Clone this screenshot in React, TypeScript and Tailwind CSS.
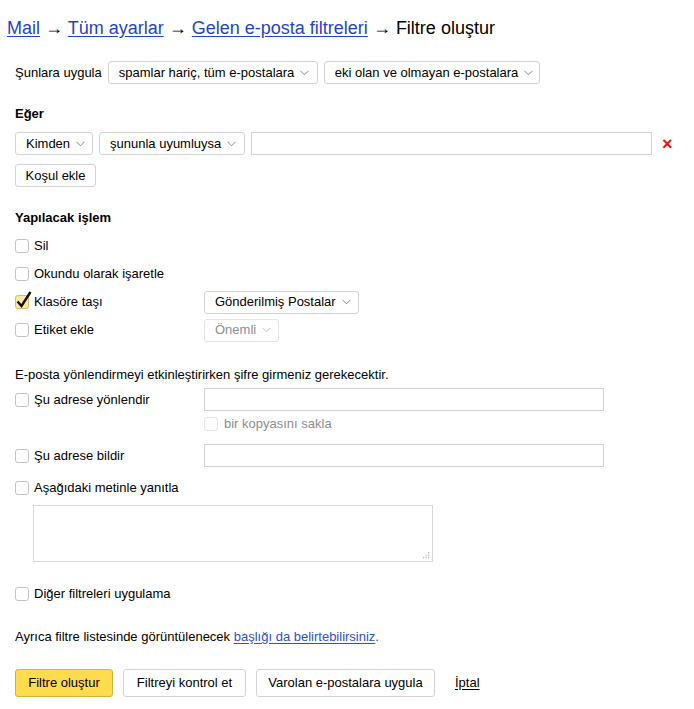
import React from 'react';

const Chevron = ({ muted = false }: { muted?: boolean }) => (
  <svg width="9" height="6" viewBox="0 0 9 6" className="ml-[6px] shrink-0">
    <path d="M0.5 0.8 L4.5 4.8 L8.5 0.8" fill="none" stroke={muted ? '#c4c4c4' : '#8a8a8a'} strokeWidth="1" />
  </svg>
);

const Select = ({ label, width, disabled = false }: { label: string; width: string; disabled?: boolean }) => (
  <div
    className={`${width} h-[23px] flex items-center justify-between pl-[10px] pr-[8px] rounded-[3px] border bg-white ${
      disabled ? 'border-[#e3e3e3] text-[#8d8d8d]' : 'border-[#d3d3d3] text-black'
    }`}
  >
    <span className="whitespace-nowrap">{label}</span>
    <Chevron muted={disabled} />
  </div>
);

const Box = ({ checked = false, disabled = false }: { checked?: boolean; disabled?: boolean }) => (
  <span
    className={`relative w-[14px] h-[14px] shrink-0 rounded-[3px] border ${
      checked ? 'bg-[#fbe7a6] border-[#d9bc62]' : disabled ? 'bg-white border-[#e2e2e2]' : 'bg-white border-[#c3c3c3]'
    }`}
  >
    {checked && (
      <svg width="18" height="19" viewBox="0 0 18 19" className="absolute left-[-1px] top-[-6px]">
        <path d="M2.5 11.5 L6.5 16 L15.5 2" fill="none" stroke="#111" strokeWidth="2.4" strokeLinejoin="miter" />
      </svg>
    )}
  </span>
);

const Check = ({ label, checked = false }: { label: string; checked?: boolean }) => (
  <label className="flex items-center gap-[5px] w-[189px] shrink-0">
    <Box checked={checked} />
    <span className="whitespace-nowrap">{label}</span>
  </label>
);

const TextBox = ({ width }: { width: string }) => (
  <div className={`${width} h-[23px] border border-[#d3d3d3] bg-white`} />
);

const App: React.FC = () => {
  return (
    <div
      className="min-h-[709px] bg-white text-black text-[13px] leading-[16px] pl-[15px] pt-[16px]"
      style={{ fontFamily: '"Liberation Sans", Arial, sans-serif' }}
    >
      {/* başlık */}
      <h1 className="h-[24px] ml-[-8px] text-[18px] leading-[24px] font-normal whitespace-nowrap">
        <a className="text-[#1f44c6] underline underline-offset-2">Mail</a> →{' '}
        <a className="text-[#1f44c6] underline underline-offset-2">Tüm ayarlar</a> →{' '}
        <a className="text-[#1f44c6] underline underline-offset-2">Gelen e-posta filtreleri</a> → Filtre oluştur
      </h1>

      <div className="mt-[21px] flex items-center gap-[6px] h-[23px]">
        <span>Şunlara uygula</span>
        <Select label="spamlar hariç, tüm e-postalara" width="w-[210px]" />
        <Select label="eki olan ve olmayan e-postalara" width="w-[216px]" />
      </div>

      <div className="mt-[22px] font-bold">Eğer</div>

      <div className="mt-[10px] flex items-center gap-[6px] h-[23px]">
        <Select label="Kimden" width="w-[78px]" />
        <Select label="şununla uyumluysa" width="w-[146px]" />
        <TextBox width="w-[401px]" />
        <span className="ml-[4px] text-[#ee1111] font-bold text-[18px] leading-[18px]">×</span>
      </div>

      <button className="mt-[9px] h-[23px] w-[81px] rounded-[3px] border border-[#d3d3d3] bg-white flex items-center justify-center">
        Koşul ekle
      </button>

      <div className="mt-[23px] font-bold">Yapılacak işlem</div>

      <div className="mt-[6px] flex flex-col">
        <div className="h-[28px] flex items-center">
          <Check label="Sil" />
        </div>
        <div className="h-[28px] flex items-center">
          <Check label="Okundu olarak işaretle" />
        </div>
        <div className="h-[28px] flex items-center">
          <Check label="Klasöre taşı" checked />
          <Select label="Gönderilmiş Postalar" width="w-[155px]" />
        </div>
        <div className="h-[28px] flex items-center">
          <Check label="Etiket ekle" />
          <Select label="Önemli" width="w-[75px]" disabled />
        </div>
      </div>

      <div className="mt-[23px]">E-posta yönlendirmeyi etkinleştirirken şifre girmeniz gerekecektir.</div>

      <div className="mt-[5px] flex items-center h-[23px]">
        <Check label="Şu adrese yönlendir" />
        <TextBox width="w-[400px]" />
      </div>
      <div className="mt-[6px] ml-[189px] flex items-center gap-[6px] h-[14px] text-[#8d8d8d]">
        <Box disabled />
        <span>bir kopyasını sakla</span>
      </div>

      <div className="mt-[13px] flex items-center h-[23px]">
        <Check label="Şu adrese bildir" />
        <TextBox width="w-[400px]" />
      </div>

      <div className="mt-[14px] flex items-center h-[14px]">
        <Check label="Aşağıdaki metinle yanıtla" />
      </div>

      <div className="relative mt-[10px] ml-[18px] w-[400px] h-[57px] border border-[#d8d8d8] bg-white">
        <textarea className="w-full h-full resize-none outline-none bg-transparent" />
        <svg width="7" height="7" viewBox="0 0 7 7" className="absolute right-[2px] bottom-[2px]">
          <rect x="5" y="0" width="1.2" height="1.2" fill="#b5b5b5" />
          <rect x="5" y="2.5" width="1.2" height="1.2" fill="#b5b5b5" />
          <rect x="2.5" y="2.5" width="1.2" height="1.2" fill="#b5b5b5" />
          <rect x="5" y="5" width="1.2" height="1.2" fill="#b5b5b5" />
          <rect x="2.5" y="5" width="1.2" height="1.2" fill="#b5b5b5" />
          <rect x="0" y="5" width="1.2" height="1.2" fill="#b5b5b5" />
        </svg>
      </div>

      <div className="mt-[25px] flex items-center h-[14px]">
        <Check label="Diğer filtreleri uygulama" />
      </div>

      <div className="mt-[28px]">
        Ayrıca filtre listesinde görüntülenecek{' '}
        <a className="text-[#2e4fd0] underline underline-offset-2">başlığı da belirtebilirsiniz</a>
        <span className="text-[#2e4fd0]">.</span>
      </div>

      <div className="mt-[24px] flex items-center h-[28px]">
        <button className="h-[28px] w-[98px] rounded-[3px] border border-[#d9b23e] bg-[#ffdb4d]">
          Filtre oluştur
        </button>
        <button className="ml-[10px] h-[28px] w-[123px] rounded-[3px] border border-[#d3d3d3] bg-white">
          Filtreyi kontrol et
        </button>
        <button className="ml-[10px] h-[28px] w-[179px] rounded-[3px] border border-[#d3d3d3] bg-white">
          Varolan e-postalara uygula
        </button>
        <a className="ml-[20px] underline underline-offset-2">İptal</a>
      </div>
    </div>
  );
};

export default App;
